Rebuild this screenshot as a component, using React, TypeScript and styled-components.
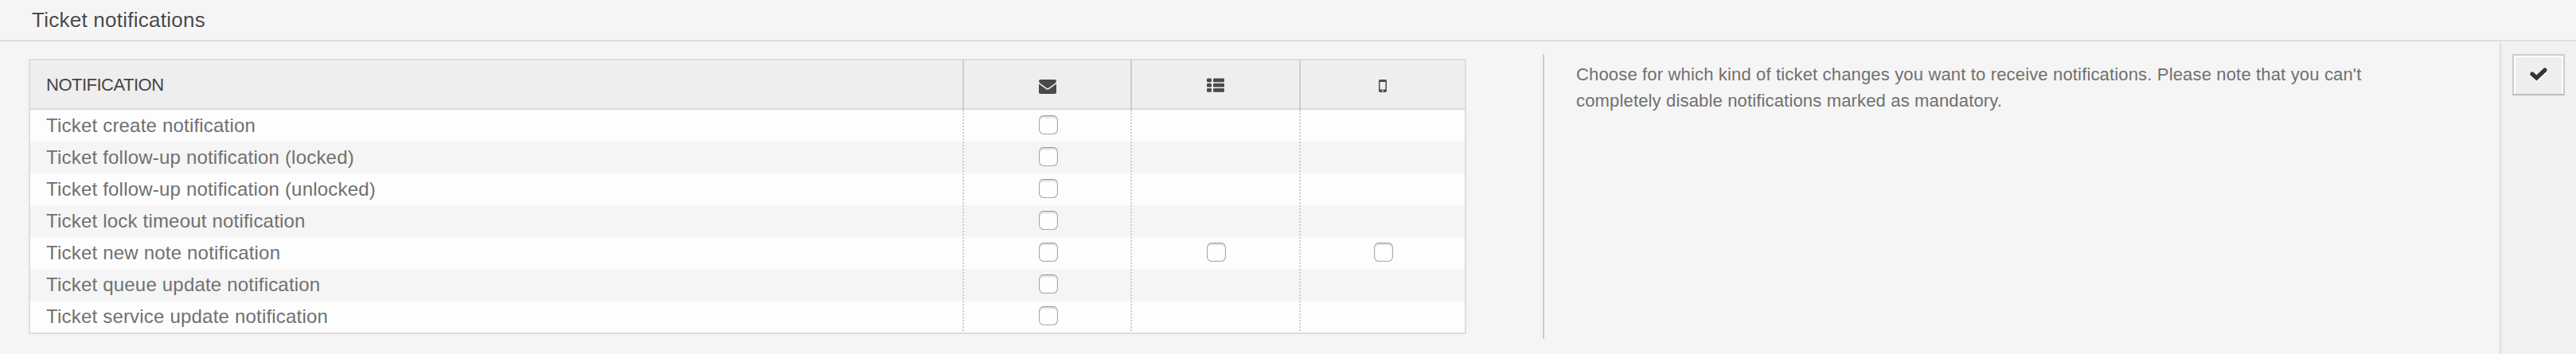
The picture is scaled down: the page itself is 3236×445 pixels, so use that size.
import React from "react";
import styled, { createGlobalStyle } from "styled-components";

const Global = createGlobalStyle`
  * { box-sizing: border-box; }
  body { margin: 0; background: #f5f5f5; font-family: "Liberation Sans", Arial, sans-serif; }
`;

const Page = styled.div`
  height: 445px;
  display: flex;
  flex-direction: column;
  overflow: hidden;
`;

const Header = styled.header`
  height: 52px;
  flex: none;
  padding: 0 0 0 40px;
  border-bottom: 2px solid #ddd;
`;

const Title = styled.h2`
  margin: 0;
  font-size: 26px;
  font-weight: 400;
  line-height: 51px;
  letter-spacing: 0.25px;
  color: #4a4a4a;
  text-shadow: 1px 2px 0 #fff;
`;

const Body = styled.div`
  flex: 1;
  display: flex;
  margin-top: 2px;
`;

const Table = styled.div`
  width: 1806px;
  height: 346px;
  margin: 20px 0 0 36px;
  border: 2px solid #ddd;
`;

const Row = styled.div<{ $head?: boolean; $even?: boolean }>`
  display: grid;
  grid-template-columns: 1171px 211px 212px 208px;
  height: ${(p) => (p.$head ? 62 : 40)}px;
  background: ${(p) => (p.$head ? "#eee" : p.$even ? "#f5f5f5" : "#fdfdfd")};
  border-bottom: ${(p) => (p.$head ? "2px solid #ddd" : "0")};
`;

const NameCell = styled.div`
  padding-left: 20px;
  font-size: 24px;
  line-height: 40px;
  letter-spacing: 0.2px;
  color: #707070;
  white-space: nowrap;
`;

const HeadCell = styled(NameCell)`
  font-size: 22px;
  line-height: 62px;
  letter-spacing: -0.5px;
  color: #444;
`;

const HeadChannel = styled.div<{ $left?: number; $top?: number }>`
  display: flex;
  align-items: center;
  justify-content: center;
  padding: ${(p) => p.$top ?? 0}px 0 0 ${(p) => p.$left ?? 0}px;
  border-left: 2px solid #ccc;
`;

const ChannelCell = styled.div<{ $left: number }>`
  display: flex;
  align-items: center;
  justify-content: center;
  padding-left: ${(p) => p.$left}px;
  background: repeating-linear-gradient(to bottom, #ccc 0 2px, transparent 2px 4px) left top / 2px 100% no-repeat;
`;

const Box = styled.input`
  appearance: none;
  width: 24px;
  height: 24px;
  margin: 0 0 2px;
  border: 1px solid #aaa;
  border-top-color: #969696;
  border-radius: 6px;
  background: #fff;
  box-shadow: inset 0 2px 2px #ddd, inset 0 0 1px #bbb;
`;

const Help = styled.p`
  width: 1202px;
  height: 358px;
  margin: 14px 0 0 96px;
  padding: 9px 0 0 40px;
  border-left: 2px solid #ccc;
  font-size: 22px;
  line-height: 33px;
  letter-spacing: 0.16px;
  white-space: nowrap;
  color: #707070;
`;

const Side = styled.aside`
  flex: 1;
  padding: 14px;
  border-left: 2px solid #ddd;
  background: #f1f1f1;
`;

const SaveButton = styled.button`
  display: flex;
  align-items: center;
  justify-content: center;
  width: 66px;
  height: 52px;
  padding: 0;
  border: 2px solid #ccc;
  border-bottom-color: #bbb;
  background: #eee;
  box-shadow: inset 2px 2px 0 #fff, inset -2px 0 0 #fff;
`;

const Icon = styled.svg`
  display: block;
  fill: #4a4a4a;
`;

const Mail = () => (
  <Icon width="22" height="18" viewBox="0 0 22 18">
    <path d="M2 0H20Q22 0 22 2Q22 3.500 20 5L13 10Q11 12 9 10L2 5Q0 3.500 0 2Q0 0 2 0Z" />
    <path d="M0 5.500L8 11.300Q11 14 14 11.300L22 5.500V16Q22 18 20 18H2Q0 18 0 16Z" />
  </Icon>
);

const rows: [string, boolean][] = [
  ["Ticket create notification", false],
  ["Ticket follow-up notification (locked)", false],
  ["Ticket follow-up notification (unlocked)", false],
  ["Ticket lock timeout notification", false],
  ["Ticket new note notification", true],
  ["Ticket queue update notification", false],
  ["Ticket service update notification", false],
];

const List = () => (
  <Icon width="22" height="18" viewBox="0 0 22 18">
    {[0.5, 6.75, 13].map((y) => (
      <React.Fragment key={y}>
        <rect y={y} width="6" height="4.800" rx="1.2" />
        <rect x="8" y={y} width="14" height="4.800" rx="1.2" />
      </React.Fragment>
    ))}
  </Icon>
);

const Mobile = () => (
  <Icon width="10" height="16" viewBox="0 0 10 16">
    <path fillRule="evenodd" d="M2 0H8Q10 0 10 2V14Q10 16 8 16H2Q0 16 0 14V2Q0 0 2 0ZM1.500 3V12.500H8.500V3ZM5 13.300A1 1 0 0 0 5 15.300A1 1 0 0 0 5 13.300Z" />
  </Icon>
);

const Check = () => (
  <svg width="24" height="20" viewBox="0 0 24 20" fill="none" strokeWidth="5.200" strokeLinejoin="miter" strokeLinecap="round">
    <path d="M4 11L9.500 16L20 6" stroke="#fff" />
    <path d="M4 9L9.500 14L20 4" stroke="#333" />
  </svg>
);

export default function App() {
  return (
    <Page>
      <Global />
      <Header>
        <Title>Ticket notifications</Title>
      </Header>
      <Body>
        <Table>
          <Row $head>
            <HeadCell>NOTIFICATION</HeadCell>
            <HeadChannel $left={1} $top={4}><Mail /></HeadChannel>
            <HeadChannel><List /></HeadChannel>
            <HeadChannel $top={2}><Mobile /></HeadChannel>
          </Row>
          {rows.map(([name, all], i) => (
            <Row key={name} $even={i % 2 === 1}>
              <NameCell>{name}</NameCell>
              <ChannelCell $left={5}><Box type="checkbox" /></ChannelCell>
              <ChannelCell $left={4}>{all && <Box type="checkbox" />}</ChannelCell>
              <ChannelCell $left={4}>{all && <Box type="checkbox" />}</ChannelCell>
            </Row>
          ))}
        </Table>
        <Help>
          Choose for which kind of ticket changes you want to receive notifications. Please note that you can't
          <br />
          completely disable notifications marked as mandatory.
        </Help>
        <Side>
          <SaveButton aria-label="Save"><Check /></SaveButton>
        </Side>
      </Body>
    </Page>
  );
}
